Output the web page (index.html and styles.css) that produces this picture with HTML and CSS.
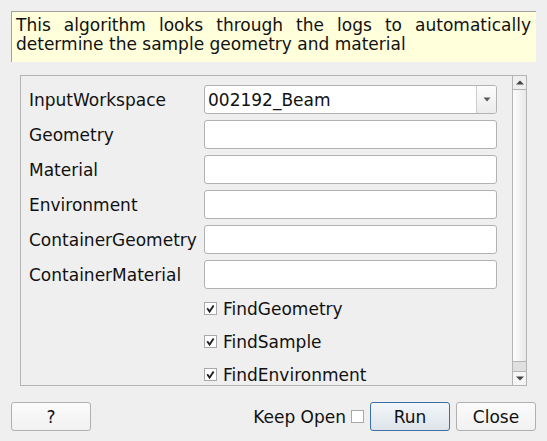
FILE: index.html
```html
<!DOCTYPE html>
<html>
<head>
<meta charset="utf-8">
<link rel="stylesheet" href="styles.css">
</head>
<body>
<div class="dialog">
  <div class="desc">This algorithm looks through the logs to automatically determine the sample geometry and material</div>
  <div class="frame">
    <div class="viewport">
      <div class="form">
        <span class="lbl">InputWorkspace</span>
        <div class="combo">
          <span class="combo-text">002192_Beam</span>
          <span class="combo-btn"><svg width="8" height="5" viewBox="0 0 8 5"><path d="M0.5 0.5 L7.5 0.5 L4 4.5 Z" fill="#5a5a5a"/></svg></span>
        </div>
        <span class="lbl">Geometry</span><div class="field"></div>
        <span class="lbl">Material</span><div class="field"></div>
        <span class="lbl">Environment</span><div class="field"></div>
        <span class="lbl">ContainerGeometry</span><div class="field"></div>
        <span class="lbl">ContainerMaterial</span><div class="field"></div>
        <span></span>
        <div class="check-row"><span class="cb"><svg width="11" height="11" viewBox="0 0 11 11"><path d="M2.2 5.2 L4.6 8.6 L8.6 2.4" fill="none" stroke="#1e1e1e" stroke-width="1.8"/></svg></span>FindGeometry</div>
        <span></span>
        <div class="check-row"><span class="cb"><svg width="11" height="11" viewBox="0 0 11 11"><path d="M2.2 5.2 L4.6 8.6 L8.6 2.4" fill="none" stroke="#1e1e1e" stroke-width="1.8"/></svg></span>FindSample</div>
        <span></span>
        <div class="check-row"><span class="cb"><svg width="11" height="11" viewBox="0 0 11 11"><path d="M2.2 5.2 L4.6 8.6 L8.6 2.4" fill="none" stroke="#1e1e1e" stroke-width="1.8"/></svg></span>FindEnvironment</div>
      </div>
    </div>
    <div class="scrollbar">
      <div class="sb-up"><svg width="8" height="5" viewBox="0 0 8 5"><path d="M0 4.5 L8 4.5 L4 0.5 Z" fill="#444"/></svg></div>
      <div class="sb-slider"></div>
      <div class="sb-groove"></div>
      <div class="sb-down"><svg width="8" height="5" viewBox="0 0 8 5"><path d="M0 0.5 L8 0.5 L4 4.5 Z" fill="#444"/></svg></div>
    </div>
  </div>
  <div class="buttons">
    <button class="btn">?</button>
    <div class="right">
      <span class="keep">Keep Open</span>
      <span class="cb keep-cb"></span>
      <button class="btn default">Run</button>
      <button class="btn">Close</button>
    </div>
  </div>
</div>
</body>
</html>
```

FILE: styles.css
```css
* { box-sizing: border-box; }
html, body { margin: 0; padding: 0; }
body {
  background: #efefef;
  font-family: "DejaVu Sans", sans-serif;
  font-size: 17px;
  color: #111;
  width: 547px;
  height: 441px;
  overflow: hidden;
}
.dialog {
  padding: 11px 0 0 11px;
}
.desc {
  width: 525px;
  height: 51px;
  background: #ffffdc;
  border-top: 1px solid #a0a0a0;
  border-left: 1px solid #a0a0a0;
  padding: 4px 5px 0 4px;
  font-size: 17px;
  line-height: 19px;
  text-align: justify;
}
.frame {
  margin: 13px 0 0 9px;
  width: 507px;
  height: 311px;
  border: 1px solid #b4b4b4;
  display: flex;
}
.viewport {
  flex: 1;
  overflow: hidden;
  padding: 9px 0 0 8px;
}
.form {
  display: grid;
  grid-template-columns: 175px 293px;
  grid-template-rows: repeat(6, 29px) repeat(3, 27px);
  row-gap: 6px;
  align-items: center;
}
.lbl { white-space: nowrap; }
.field {
  height: 29px;
  background: #fff;
  border: 1px solid #b2b2b2;
  border-radius: 3px;
}
.combo {
  height: 29px;
  background: #fff;
  border: 1px solid #b2b2b2;
  border-radius: 3px;
  display: flex;
  align-items: center;
}
.combo-text { flex: 1; padding-left: 3px; }
.combo-btn {
  width: 20px;
  height: 100%;
  border-left: 1px solid #cdcdcd;
  border-radius: 0 2px 2px 0;
  background: linear-gradient(#fdfdfd, #ebebeb);
  display: flex;
  align-items: center;
  justify-content: center;
}
.check-row {
  display: flex;
  align-items: center;
  gap: 6px;
  white-space: nowrap;
}
.cb {
  width: 13px;
  height: 13px;
  border: 1px solid #a8a8a8;
  background: #fff;
  display: flex;
  align-items: center;
  justify-content: center;
  flex: none;
}
.scrollbar {
  width: 14px;
  border-left: 1px solid #b4b4b4;
  display: flex;
  flex-direction: column;
}
.sb-up {
  height: 14px;
  border-bottom: 1px solid #b4b4b4;
  background: #efefef;
  display: flex;
  align-items: center;
  justify-content: center;
}
.sb-slider {
  flex: 1;
  background: linear-gradient(to right, #fdfdfd, #e8e8e8);
}
.sb-groove {
  height: 10px;
  border-top: 1px solid #b4b4b4;
  background: #e0e0e0;
}
.sb-down {
  height: 14px;
  border-top: 1px solid #b4b4b4;
  background: #f6f6f6;
  display: flex;
  align-items: center;
  justify-content: center;
}
.buttons {
  margin-top: 16px;
  width: 525px;
  display: flex;
  justify-content: space-between;
  align-items: center;
}
.right {
  display: flex;
  align-items: center;
}
.keep { margin-right: 5px; }
.keep-cb { margin-right: 6px; }
.btn {
  width: 80px;
  height: 29px;
  border: 1px solid #b0b0b0;
  border-radius: 3px;
  background: linear-gradient(#fbfbfb, #f1f1f1);
  font-family: "DejaVu Sans", sans-serif;
  font-size: 17px;
  color: #111;
  padding: 0;
}
.btn.default {
  border-color: #3b6fa3;
  background: linear-gradient(#f3f6f9, #dde4ea);
  margin-right: 6px;
}
```
